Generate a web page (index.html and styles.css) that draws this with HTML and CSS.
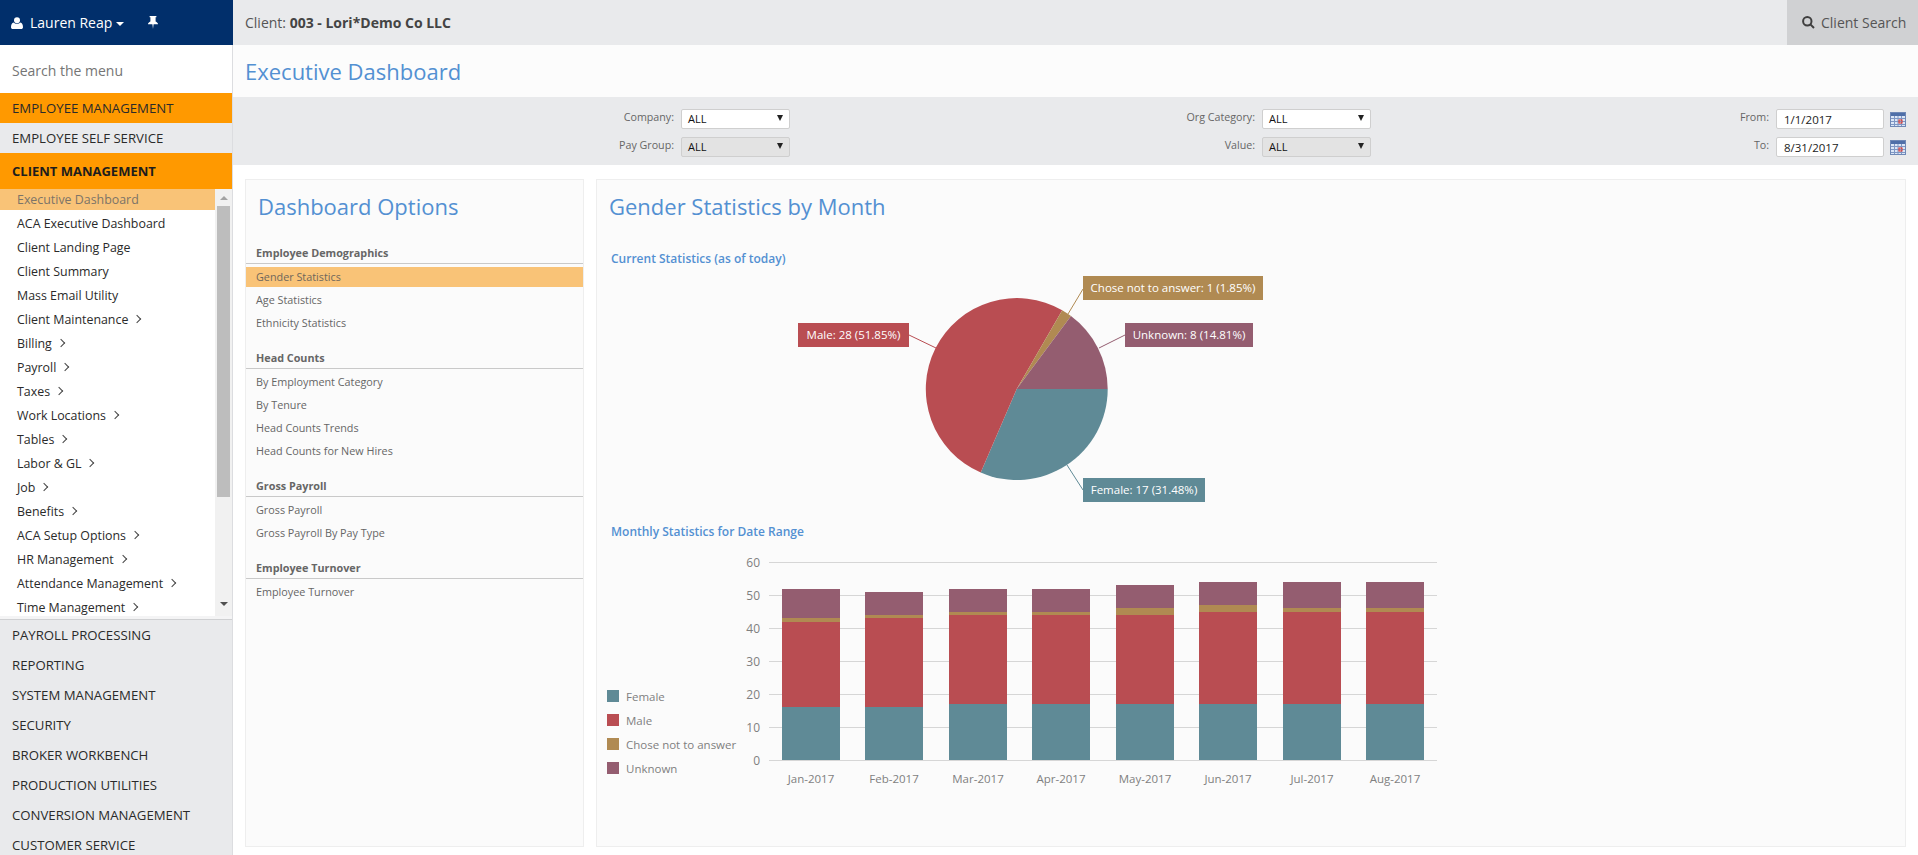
FILE: index.html
```html
<!DOCTYPE html>
<html lang="en">
<head>
<meta charset="utf-8">
<title>Executive Dashboard</title>
<link rel="stylesheet" href="styles.css">
</head>
<body>
<div class="app">
  <aside class="sidebar">
    <div class="userbar">
      <svg class="ico-user" viewBox="0 0 12 12"><circle cx="6" cy="3.2" r="3"/><path d="M0 10.2C0 7.6 1 5.8 2.6 5.4 3.4 6.2 4.6 6.7 6 6.7s2.6-.5 3.4-1.3C11 5.8 12 7.6 12 10.2 12 11.3 11.2 12 10.2 12H1.8C.8 12 0 11.3 0 10.2z"/></svg>
      <span class="username">Lauren Reap</span>
      <span class="caret"></span>
      <svg class="ico-pin" viewBox="0 0 10 13"><path d="M1.6 0h6.8v1.2H7.6v4.4C8.9 6.2 10 7.2 10 8.2H5.6L5 13l-.6-4.8H0c0-1 1.1-2 2.4-2.6V1.2h-.8z"/></svg>
    </div>
    <div class="menu">
      <div class="search">Search the menu</div>
      <div class="sect sect-on">EMPLOYEE MANAGEMENT</div>
      <div class="sect">EMPLOYEE SELF SERVICE</div>
      <div class="sect sect-open">CLIENT MANAGEMENT</div>
      <div class="sub">
        <ul class="sublist">
          <li class="subitem subitem-on">Executive Dashboard</li>
          <li class="subitem">ACA Executive Dashboard</li>
          <li class="subitem">Client Landing Page</li>
          <li class="subitem">Client Summary</li>
          <li class="subitem">Mass Email Utility</li>
          <li class="subitem more">Client Maintenance</li>
          <li class="subitem more">Billing</li>
          <li class="subitem more">Payroll</li>
          <li class="subitem more">Taxes</li>
          <li class="subitem more">Work Locations</li>
          <li class="subitem more">Tables</li>
          <li class="subitem more">Labor &amp; GL</li>
          <li class="subitem more">Job</li>
          <li class="subitem more">Benefits</li>
          <li class="subitem more">ACA Setup Options</li>
          <li class="subitem more">HR Management</li>
          <li class="subitem more">Attendance Management</li>
          <li class="subitem more">Time Management</li>
        </ul>
        <div class="scroll">
          <span class="arrow-up"></span>
          <span class="thumb"></span>
          <span class="arrow-down"></span>
        </div>
      </div>
      <div class="rest">
        <div class="sect">PAYROLL PROCESSING</div>
        <div class="sect">REPORTING</div>
        <div class="sect">SYSTEM MANAGEMENT</div>
        <div class="sect">SECURITY</div>
        <div class="sect">BROKER WORKBENCH</div>
        <div class="sect">PRODUCTION UTILITIES</div>
        <div class="sect">CONVERSION MANAGEMENT</div>
        <div class="sect">CUSTOMER SERVICE</div>
      </div>
    </div>
  </aside>

  <main class="main">
    <header class="topbar">
      <div class="client">Client: <b>003 - Lori*Demo Co LLC</b></div>
      <div class="clientsearch">
        <svg class="ico-search" viewBox="0 0 13 13"><circle cx="5.3" cy="5.3" r="4.2"/><path d="M8.4 8.4l3.6 3.6"/></svg>
        <span>Client Search</span>
      </div>
    </header>
    <div class="titleband"><h1 class="title">Executive Dashboard</h1></div>
    <div class="filters">
      <div class="fgroup">
        <div class="frow"><label>Company:</label><div class="sel">ALL<i class="sel-arrow"></i></div></div>
        <div class="frow"><label>Pay Group:</label><div class="sel sel-off">ALL<i class="sel-arrow"></i></div></div>
      </div>
      <div class="fgroup">
        <div class="frow"><label>Org Category:</label><div class="sel">ALL<i class="sel-arrow"></i></div></div>
        <div class="frow"><label>Value:</label><div class="sel sel-off">ALL<i class="sel-arrow"></i></div></div>
      </div>
      <div class="fgroup">
        <div class="frow"><label>From:</label><div class="date">1/1/2017</div>
          <svg class="ico-cal" viewBox="0 0 16 16"><rect class="cal-body" x=".5" y="1.5" width="15" height="14"/><rect class="cal-head" x="1" y="2" width="14" height="3"/><path class="cal-grid" d="M1 7.5h14M1 10.5h14M1 13.5h14M4.5 5v10M8 5v10M11.5 5v10"/><rect class="cal-day" x="9" y="9" width="3" height="3"/></svg></div>
        <div class="frow"><label>To:</label><div class="date">8/31/2017</div>
          <svg class="ico-cal" viewBox="0 0 16 16"><rect class="cal-body" x=".5" y="1.5" width="15" height="14"/><rect class="cal-head" x="1" y="2" width="14" height="3"/><path class="cal-grid" d="M1 7.5h14M1 10.5h14M1 13.5h14M4.5 5v10M8 5v10M11.5 5v10"/><rect class="cal-day" x="9" y="9" width="3" height="3"/></svg></div>
      </div>
    </div>
    <div class="content">
      <section class="panel options">
        <h2 class="opt-title">Dashboard Options</h2>
        <h3 class="opt-head">Employee Demographics</h3>
        <ul class="opt-list">
          <li class="opt opt-on">Gender Statistics</li>
          <li class="opt">Age Statistics</li>
          <li class="opt">Ethnicity Statistics</li>
        </ul>
        <h3 class="opt-head">Head Counts</h3>
        <ul class="opt-list">
          <li class="opt">By Employment Category</li>
          <li class="opt">By Tenure</li>
          <li class="opt">Head Counts Trends</li>
          <li class="opt">Head Counts for New Hires</li>
        </ul>
        <h3 class="opt-head">Gross Payroll</h3>
        <ul class="opt-list">
          <li class="opt">Gross Payroll</li>
          <li class="opt">Gross Payroll By Pay Type</li>
        </ul>
        <h3 class="opt-head">Employee Turnover</h3>
        <ul class="opt-list">
          <li class="opt">Employee Turnover</li>
        </ul>
      </section>
      <section class="panel stats">
        <h2 class="stats-title">Gender Statistics by Month</h2>
        <h4 class="stats-sub">Current Statistics (as of today)</h4>
        <svg class="pie" viewBox="597 270 1300 240" width="1300" height="240">
          <path class="f-female" d="M1016.7 389H1107.7A91 91 0 0 1 980.7 472.6Z"/>
          <path class="f-male" d="M1016.7 389L980.7 472.6A91 91 0 1 1 1062.2 310.2Z"/>
          <path class="f-chose" d="M1016.7 389L1062.2 310.2A91 91 0 0 1 1071 316Z"/>
          <path class="f-unknown" d="M1016.7 389L1071 316A91 91 0 0 1 1107.7 389Z"/>
          <path class="l-male" d="M909 335L936 348"/>
          <path class="l-chose" d="M1083 289L1068 314"/>
          <path class="l-unknown" d="M1125 335L1099 348"/>
          <path class="l-female" d="M1067 465L1083 490"/>
          <rect class="f-male" x="798" y="323" width="111" height="24"/>
          <rect class="f-chose" x="1083" y="276" width="180" height="24"/>
          <rect class="f-unknown" x="1125" y="323" width="128" height="24"/>
          <rect class="f-female" x="1083" y="478" width="122" height="24"/>
          <text class="pie-label" x="853.5" y="339">Male: 28 (51.85%)</text>
          <text class="pie-label" x="1173" y="292">Chose not to answer: 1 (1.85%)</text>
          <text class="pie-label" x="1189" y="339">Unknown: 8 (14.81%)</text>
          <text class="pie-label" x="1144" y="494">Female: 17 (31.48%)</text>
        </svg>
        <h4 class="stats-sub stats-sub2">Monthly Statistics for Date Range</h4>
        <svg class="bars" viewBox="597 550 1300 240" width="1300" height="240">
          <path class="grid" d="M769 562.5H1437M769 595.5H1437M769 628.5H1437M769 661.5H1437M769 694.5H1437M769 727.5H1437M769 760.5H1437"/>
          <g transform="translate(0 760.3) scale(1 -3.3)" class="barset">
            <rect class="f-female" x="782" y="0" width="58" height="16"/><rect class="f-male" x="782" y="16" width="58" height="26"/><rect class="f-chose" x="782" y="42" width="58" height="1"/><rect class="f-unknown" x="782" y="43" width="58" height="9"/>
            <rect class="f-female" x="865" y="0" width="58" height="16"/><rect class="f-male" x="865" y="16" width="58" height="27"/><rect class="f-chose" x="865" y="43" width="58" height="1"/><rect class="f-unknown" x="865" y="44" width="58" height="7"/>
            <rect class="f-female" x="949" y="0" width="58" height="17"/><rect class="f-male" x="949" y="17" width="58" height="27"/><rect class="f-chose" x="949" y="44" width="58" height="1"/><rect class="f-unknown" x="949" y="45" width="58" height="7"/>
            <rect class="f-female" x="1032" y="0" width="58" height="17"/><rect class="f-male" x="1032" y="17" width="58" height="27"/><rect class="f-chose" x="1032" y="44" width="58" height="1"/><rect class="f-unknown" x="1032" y="45" width="58" height="7"/>
            <rect class="f-female" x="1116" y="0" width="58" height="17"/><rect class="f-male" x="1116" y="17" width="58" height="27"/><rect class="f-chose" x="1116" y="44" width="58" height="2"/><rect class="f-unknown" x="1116" y="46" width="58" height="7"/>
            <rect class="f-female" x="1199" y="0" width="58" height="17"/><rect class="f-male" x="1199" y="17" width="58" height="28"/><rect class="f-chose" x="1199" y="45" width="58" height="2"/><rect class="f-unknown" x="1199" y="47" width="58" height="7"/>
            <rect class="f-female" x="1283" y="0" width="58" height="17"/><rect class="f-male" x="1283" y="17" width="58" height="28"/><rect class="f-chose" x="1283" y="45" width="58" height="1"/><rect class="f-unknown" x="1283" y="46" width="58" height="8"/>
            <rect class="f-female" x="1366" y="0" width="58" height="17"/><rect class="f-male" x="1366" y="17" width="58" height="28"/><rect class="f-chose" x="1366" y="45" width="58" height="1"/><rect class="f-unknown" x="1366" y="46" width="58" height="8"/>
          </g>
          <g class="yaxis">
            <text x="760" y="567">60</text><text x="760" y="600">50</text><text x="760" y="633">40</text><text x="760" y="666">30</text><text x="760" y="699">20</text><text x="760" y="732">10</text><text x="760" y="765">0</text>
          </g>
          <g class="xaxis">
            <text x="811" y="783">Jan-2017</text><text x="894" y="783">Feb-2017</text><text x="978" y="783">Mar-2017</text><text x="1061" y="783">Apr-2017</text><text x="1145" y="783">May-2017</text><text x="1228" y="783">Jun-2017</text><text x="1312" y="783">Jul-2017</text><text x="1395" y="783">Aug-2017</text>
          </g>
          <g class="legend">
            <rect class="f-female" x="607" y="690" width="12" height="12"/><text x="626" y="701">Female</text>
            <rect class="f-male" x="607" y="714" width="12" height="12"/><text x="626" y="725">Male</text>
            <rect class="f-chose" x="607" y="738" width="12" height="12"/><text x="626" y="749">Chose not to answer</text>
            <rect class="f-unknown" x="607" y="762" width="12" height="12"/><text x="626" y="773">Unknown</text>
          </g>
        </svg>
      </section>
    </div>
  </main>
</div>
</body>
</html>
```

FILE: styles.css
```css
* { box-sizing: border-box; }
html, body { margin: 0; height: 100%; overflow: hidden; }
body { font-family: "Open Sans", "Noto Sans", sans-serif; color: #333; background: #fff; }
h1, h2, h3, h4, ul { margin: 0; padding: 0; font-weight: normal; }
ul { list-style: none; }

.app { display: flex; width: 1918px; height: 855px; overflow: hidden; }

/* sidebar */
.sidebar { width: 233px; flex: none; display: flex; flex-direction: column; height: 855px; }
.userbar { height: 45px; background: #012f6b; color: #fff; display: flex; align-items: center; padding-left: 11px; font-size: 14px; }
.ico-user { width: 12px; height: 12px; fill: #fff; margin-right: 7px; }
.username { white-space: nowrap; }
.caret { width: 0; height: 0; margin-left: 4px; margin-top: 2px; border-left: 4px solid transparent; border-right: 4px solid transparent; border-top: 4px solid #fff; }
.ico-pin { width: 10px; height: 13px; fill: #fff; margin-left: 24px; margin-top: -1px; }
.menu { flex: 1; min-height: 0; border-right: 1px solid #dcdde0; overflow: hidden; display: flex; flex-direction: column; }
.search { height: 48px; flex: none; display: flex; align-items: center; padding: 2px 0 0 12px; font-size: 14px; color: #757575; background: #fff; }
.sect { height: 30px; flex: none; display: flex; align-items: center; padding-left: 12px; font-size: 13.2px; color: #2a2a2a; background: #e9eaec; white-space: nowrap; }
.sect-on { background: #ff9900; }
.sect-open { height: 36px; background: #ff9900; font-size: 13px; font-weight: 700; color: #1d1d1d; }
.sub { height: 427px; flex: none; display: flex; background: #fff; }
.sublist { flex: 1; min-width: 0; overflow: hidden; }
.subitem { height: 24px; display: flex; align-items: center; padding-left: 17px; font-size: 12.4px; color: #2a2a2a; white-space: nowrap; }
.subitem-on { height: 21px; margin-bottom: 1px; background: #f9c377; color: #7c7468; }
.more::after { content: ""; width: 5px; height: 5px; margin-left: 6px; border-top: 1px solid #444; border-right: 1px solid #444; transform: rotate(45deg); }
.scroll { width: 17px; flex: none; background: #f1f1f1; display: flex; flex-direction: column; align-items: center; }
.arrow-up { width: 0; height: 0; margin-top: 7px; border-left: 4px solid transparent; border-right: 4px solid transparent; border-bottom: 4px solid #a3a3a3; }
.thumb { width: 13px; height: 291px; margin-top: 6px; background: #bdbdbd; }
.arrow-down { width: 0; height: 0; margin-top: 105px; border-left: 4px solid transparent; border-right: 4px solid transparent; border-top: 4px solid #505050; }
.rest { flex: 1; min-height: 0; background: #e9eaec; margin-top: 3px; border-top: 1px solid #cfd0d2; box-shadow: 0 -3px 0 #f4f4f5; }

/* main */
.main { flex: 1; min-width: 0; display: flex; flex-direction: column; height: 855px; }
.topbar { height: 45px; flex: none; background: #e9eaec; display: flex; justify-content: space-between; align-items: stretch; }
.client { font-size: 14px; color: #555; padding-left: 12px; align-self: center; }
.client b { font-weight: 700; color: #444; }
.clientsearch { width: 131px; background: #d0d1d3; display: flex; align-items: center; padding-left: 15px; font-size: 14px; color: #555; white-space: nowrap; }
.ico-search { width: 13px; height: 13px; fill: none; stroke: #3f3f3f; stroke-width: 2; margin-right: 6px; }
.titleband { height: 52px; flex: none; background: #fcfcfc; display: flex; align-items: center; padding-left: 12px; }
.title { font-size: 22px; color: #5390d2; line-height: 1; }
.filters { height: 68px; flex: none; background: #e9eaec; display: grid; grid-template-columns: 557px 581px 535px; padding-top: 12px; }
.fgroup { display: flex; flex-direction: column; gap: 8px; }
.frow { height: 20px; display: flex; justify-content: flex-end; align-items: center; font-size: 10.7px; color: #666; }
.frow label { margin-right: 7px; margin-top: -4px; }
.sel { width: 109px; height: 20px; padding: 0 0 2px 6px; background: #fff; border: 1px solid #cfcfcf; border-radius: 2px; font-size: 11px; color: #111; display: flex; align-items: center; justify-content: space-between; }
.sel-off { background: #e3e3e3; }
.sel-arrow { width: 0; height: 0; margin-right: 6px; border-left: 3.5px solid transparent; border-right: 3.5px solid transparent; border-top: 6px solid #222; }
.date { width: 108px; height: 20px; padding-left: 7px; background: #fff; border: 1px solid #cfcfcf; border-radius: 2px; font-size: 11.5px; color: #222; display: flex; align-items: center; }
.ico-cal { width: 16px; height: 16px; margin-left: 6px; }
.cal-body { fill: #dbe6f6; stroke: #6f88b6; }
.cal-head { fill: #4f6fa8; }
.cal-grid { fill: none; stroke: #7f97c4; stroke-width: 1; }
.cal-day { fill: none; stroke: #e2342a; stroke-width: 1; }

/* content */
.content { flex: 1; min-height: 0; background: #fff; display: flex; gap: 12px; padding: 14px 12px 8px 12px; }
.panel { background: #fbfbfb; border: 1px solid #eeeeee; min-height: 0; }
.options { width: 339px; flex: none; }
.stats { flex: 1; min-width: 0; overflow: hidden; }
.opt-title { font-size: 22px; color: #5390d2; line-height: 30px; padding: 11px 0 0 12px; height: 63px; }
.opt-head { height: 21px; padding-left: 10px; font-size: 10.8px; font-weight: 700; color: #666; line-height: 20px; border-bottom: 1px solid #c9c9c9; }
.opt-list { padding-top: 2px; padding-bottom: 13px; }
.opt { height: 23px; display: flex; align-items: center; padding: 0 0 2px 10px; font-size: 10.8px; color: #666; }
.opt-on { height: 20px; margin-top: 1px; margin-bottom: 2px; background: #f9c377; color: #6e675c; }
.stats-title { font-size: 22px; color: #5390d2; line-height: 30px; padding: 11px 0 0 12px; height: 63px; }
.stats-sub { font-size: 12px; font-weight: 600; color: #5390d2; line-height: 18px; padding-left: 14px; height: 20px; margin-top: 7px; }
.stats-sub2 { margin-top: 13px; height: 27px; }
.pie, .bars { display: block; }
.f-female { fill: #5f8a96; }
.f-male { fill: #b94d52; }
.f-chose { fill: #b08a52; }
.f-unknown { fill: #945d70; }
.l-male, .l-chose, .l-unknown, .l-female { fill: none; stroke-width: 1; }
.l-male { stroke: #b94d52; }
.l-chose { stroke: #b08a52; }
.l-unknown { stroke: #945d70; }
.l-female { stroke: #5f8a96; }
.pie-label { font-size: 11.5px; fill: #fff; text-anchor: middle; }
.grid { fill: none; stroke: #d6d6d6; stroke-width: 1; }
.barset { shape-rendering: crispEdges; }
.yaxis text { font-size: 12px; fill: #7f7f7f; text-anchor: end; }
.xaxis text { font-size: 11.5px; fill: #7f7f7f; text-anchor: middle; }
.legend text { font-size: 11.5px; fill: #7f7f7f; }
```
